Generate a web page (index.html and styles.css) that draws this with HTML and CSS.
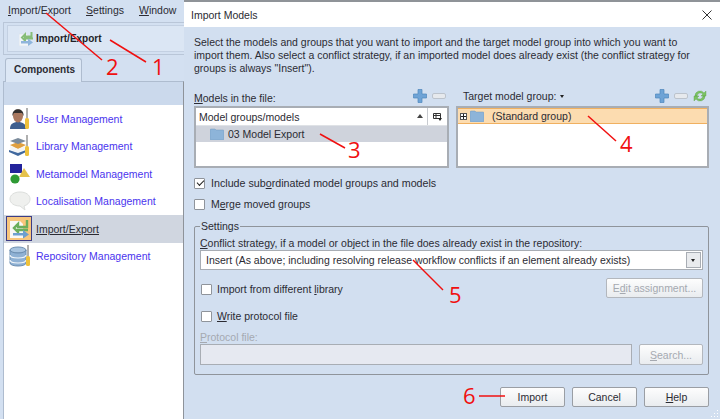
FILE: index.html
```html
<!DOCTYPE html>
<html lang="en">
  <head>
    <meta charset="UTF-8" />
    <title>Import Models</title>
    <link rel="stylesheet" href="styles.css">
  </head>
  <body>
    <div class="app">
      <div class="sidebar">
        <div class="menubar">
          <span><u>I</u>mport/Export</span>
          <span><u>S</u>ettings</span>
          <span><u>W</u>indow</span>
        </div>
        <div class="toolbar">
          <div class="tool-button">
            <svg class="tool-icon" viewBox="0 0 14 15" width="14" height="15">
              <path d="M0 3h8l2 2v10H0z" fill="#f1f5f9" stroke="#d5dde6" stroke-width=".5"/>
              <path d="M12.500 1v4.500H6V3.500L3 6.500l3 3v-2h8" fill="none" stroke="#86bd78" stroke-width="2"/>
              <path d="M2 10h7V7.500l5 4-5 3.500v-2.500H2z" fill="#8fb5dc"/>
            </svg>
            <b>Import/Export</b>
          </div>
        </div>
        <div class="tabs">
          <div class="tab">Components</div>
        </div>
        <div class="panel">
          <div class="panel-band"></div>
          <ul class="nav">
            <li>
              <svg viewBox="0 0 22 22" width="22" height="22">
                <path d="M1 21c0-5 3-7 8-7s8 2 8 7z" fill="#3f5f8f"/>
                <ellipse cx="9" cy="8" rx="5" ry="6.500" fill="#a9785f"/>
                <path d="M3.500 8c-1-9 12-9 11 0l-1.500-3H5z" fill="#33302e"/>
                <rect x="17" y="0" width="2" height="10" fill="#b0b0b0"/>
                <rect x="16" y="10" width="4" height="11" rx="1.500" fill="#eec13c"/>
              </svg>
              <a>User Management</a>
            </li>
            <li>
              <svg viewBox="0 0 22 22" width="22" height="22">
                <path d="M0 14l8-3 9 3-8 4z" fill="#f3f4f5"/>
                <path d="M0 15v2l9 4 8-4v-2l-8 3z" fill="#41699e"/>
                <path d="M1 10l8-3 8 3-8 4z" fill="#e0a040"/>
                <path d="M1 11v2l8 3 8-3v-2l-8 3z" fill="#f6f6f2"/>
                <path d="M1 6l8-3 8 3-8 3z" fill="#7b8b9b"/>
                <rect x="17" y="0" width="2" height="11" fill="#b0b0b0"/>
                <rect x="16" y="11" width="4" height="10" rx="1.500" fill="#eec13c"/>
              </svg>
              <a>Library Management</a>
            </li>
            <li>
              <svg viewBox="0 0 22 22" width="22" height="22">
                <rect x="1" y="1" width="12" height="9" fill="#23239b"/>
                <path d="M15 5l6 9H10z" fill="#e5c24c"/>
                <circle cx="6" cy="16" r="4.600" fill="#2f9a35"/>
              </svg>
              <a>Metamodel Management</a>
            </li>
            <li>
              <svg viewBox="0 0 22 22" width="22" height="22">
                <path d="M11 2c6 0 10 3 10 7s-3 6-6 7l1 4-5-4C5 16 1 13 1 9s4-7 10-7z" fill="#eff0ee" stroke="#dcdedc"/>
              </svg>
              <a>Localisation Management</a>
            </li>
            <li class="active">
              <svg viewBox="0 0 26 25" width="26" height="25">
                <rect x=".5" y=".5" width="25" height="24" fill="#f8c67c" stroke="#3d3d85"/>
                <path d="M4 5h10l3 3v14H4z" fill="#f8f8f6"/>
                <path d="M21 4v7H12V8l-4 4 4 4v-2h10" fill="none" stroke="#6aae5c" stroke-width="2.400"/>
                <path d="M7 17h10v-3l6 4.500-6 4v-3H7z" fill="#6d9fd0"/>
              </svg>
              <a>Import/Export</a>
            </li>
            <li>
              <svg viewBox="0 0 22 22" width="22" height="22">
                <ellipse cx="9" cy="5" rx="8" ry="3" fill="#a8c4e0" stroke="#6d8fb2"/>
                <path d="M1 5v13c0 4 16 4 16 0V5c0 4-16 4-16 0z" fill="#8fb1d4" stroke="#6d8fb2"/>
                <path d="M1 10c0 4 16 4 16 0M1 15c0 4 16 4 16 0" fill="none" stroke="#f1f5f9" stroke-width="1.200"/>
                <rect x="18" y="0" width="2" height="11" fill="#b0b0b0"/>
                <rect x="17" y="11" width="4" height="10" rx="1.500" fill="#eec13c"/>
              </svg>
              <a>Repository Management</a>
            </li>
          </ul>
        </div>
      </div>

      <div class="dialog">
        <div class="titlebar">
          <span>Import Models</span>
          <svg viewBox="0 0 10 10" width="10" height="10"><path d="M.5.5l9 9M9.500.5l-9 9" stroke="#333" fill="none"/></svg>
        </div>
        <div class="dialog-body">
          <p class="intro">Select the models and groups that you want to import and the target model group into which you want to<br>import them. Also select a conflict strategy, if an imported model does already exist (the conflict strategy for<br>groups is always "Insert").</p>

          <div class="lists">
            <div class="list-col">
              <div class="list-head">
                <label><u>M</u>odels in the file:</label>
                <div class="mini-tools">
                  <svg viewBox="0 0 14 14" width="14" height="14"><path d="M5 .5h4v4.500h4.500v4H9v4.500H5V9H.5V5H5z" fill="#6ea3d6" stroke="#4f86bb" stroke-width=".7"/></svg>
                  <svg viewBox="0 0 14 6" width="14" height="6"><rect x=".5" y=".5" width="13" height="5" rx="1.500" fill="#e6e9ed" stroke="#bcc3cc"/></svg>
                </div>
              </div>
              <div class="list-box">
                <div class="col-header">
                  <span>Model groups/models</span>
                  <span class="sort-mark"></span>
                  <span class="col-pick">
                    <svg viewBox="0 0 9 9" width="9" height="9"><path d="M.5 1.500h7v5h-7zM.5 3.500h7M3 1.500v5" fill="none" stroke="#333"/><path d="M5 6h4L7 9z" fill="#222"/></svg>
                  </span>
                </div>
                <div class="model-row">
                  <svg viewBox="0 0 14 12" width="14" height="12"><path d="M0 2q0-1 1-1h4l1 1h7q1 0 1 1v8q0 1-1 1H1q-1 0-1-1z" fill="#8db4d9" stroke="#7199bf" stroke-width=".5"/></svg>
                  <span>03 Model Export</span>
                </div>
              </div>
            </div>
            <div class="list-col target">
              <div class="list-head">
                <label>Target model group: <span class="caret"></span></label>
                <div class="mini-tools">
                  <svg viewBox="0 0 14 14" width="14" height="14"><path d="M5 .5h4v4.500h4.500v4H9v4.500H5V9H.5V5H5z" fill="#6ea3d6" stroke="#4f86bb" stroke-width=".7"/></svg>
                  <svg viewBox="0 0 14 6" width="14" height="6"><rect x=".5" y=".5" width="13" height="5" rx="1.500" fill="#e6e9ed" stroke="#bcc3cc"/></svg>
                  <svg viewBox="0 0 14 14" width="14" height="14"><path d="M2 7a5 5 0 0 1 9-3l2-2v5H8l2-2a3.500 3.500 0 0 0-6 2zM12 7a5 5 0 0 1-9 3l-2 2V7h5l-2 2a3.500 3.500 0 0 0 6-2z" fill="#7cc463" stroke="#5b9e48" stroke-width=".4"/></svg>
                </div>
              </div>
              <div class="list-box">
                <div class="tree-row">
                  <span class="expander"></span>
                  <svg viewBox="0 0 14 12" width="14" height="12"><path d="M0 2q0-1 1-1h4l1 1h7q1 0 1 1v8q0 1-1 1H1q-1 0-1-1z" fill="#8db4d9" stroke="#7199bf" stroke-width=".5"/></svg>
                  <span>(Standard group)</span>
                </div>
              </div>
            </div>
          </div>

          <div class="check-row first"><span class="check checked"></span><span>Include sub<u>o</u>rdinated model groups and models</span></div>
          <div class="check-row second"><span class="check"></span><span>M<u>e</u>rge moved groups</span></div>

          <fieldset class="settings">
            <legend>Settings</legend>
            <div class="conflict-label"><u>C</u>onflict strategy, if a model or object in the file does already exist in the repository:</div>
            <div class="select">
              <span>Insert (As above; including resolving release workflow conflicts if an element already exists)</span>
              <span class="select-btn"></span>
            </div>
            <div class="option-row">
              <div class="check-row"><span class="check"></span><span>Import from different <u>l</u>ibrary</span></div>
              <button class="btn disabled edit-btn">E<u>d</u>it assignment...</button>
            </div>
            <div class="check-row protocol"><span class="check"></span><span><u>W</u>rite protocol file</span></div>
            <div class="protocol-label"><u>P</u>rotocol file:</div>
            <div class="protocol-row">
              <div class="protocol-input"></div>
              <button class="btn disabled search-btn"><u>S</u>earch...</button>
            </div>
          </fieldset>

          <div class="actions">
            <button class="btn">Import</button>
            <button class="btn">Cancel</button>
            <button class="btn"><u>H</u>elp</button>
          </div>

          <svg class="grip" viewBox="0 0 9 9" width="9" height="9">
            <path d="M7 1h1v1H7zM4 4h1v1H4zM7 4h1v1H7zM1 7h1v1H1zM4 7h1v1H4zM7 7h1v1H7z" fill="#fff"/>
          </svg>
        </div>
      </div>
    </div>

    <!-- red callouts drawn on top of the screenshot -->
    <svg class="callouts" viewBox="0 0 720 419" width="720" height="419">
      <g stroke="#f01010" stroke-width="1.500" fill="none">
        <line x1="110" y1="40" x2="146" y2="62"/>
        <line x1="46" y1="13" x2="102" y2="60"/>
        <line x1="320" y1="134" x2="345" y2="148"/>
        <line x1="588" y1="116" x2="616" y2="141"/>
        <line x1="413" y1="260" x2="443" y2="290"/>
        <line x1="479" y1="396" x2="505" y2="396"/>
      </g>
      <g class="callout-num">
        <text x="152" y="75">1</text>
        <text x="106" y="75">2</text>
        <text x="348" y="158">3</text>
        <text x="620" y="152">4</text>
        <text x="449" y="303">5</text>
        <text x="463" y="404">6</text>
      </g>
    </svg>
  </body>
</html>
```

FILE: styles.css
```css
/* General styles */
* {
  box-sizing: border-box;
}

html,
body {
  margin: 0;
  height: 100%;
  overflow: hidden;
}

body {
  font-family: "Liberation Sans", Arial, sans-serif;
  font-size: 10.500px;
  color: #2b2b33;
  position: relative;
}

.app {
  display: flex;
  width: 720px;
  height: 419px;
  background-color: #d2dff0;
}

/* Left side of the main window */
.sidebar {
  width: 184px;
  flex: none;
  display: flex;
  flex-direction: column;
  background-color: #d3e0f1;
}

.menubar {
  height: 20px;
  padding-left: 8px;
  display: flex;
  align-items: center;
  gap: 15px;
}

.toolbar {
  margin: 2px 0 0 3px;
  height: 33px;
  padding: 2px 0 2px 3px;
  border: 1px solid #b9c6d8;
  border-right: none;
}

.tool-button {
  height: 27px;
  padding-left: 11px;
  display: flex;
  align-items: center;
  gap: 3px;
  border: 1px solid #c3d0e2;
  border-right: none;
  background-color: #dbe6f4;
}

.tool-button b {
  font-size: 10px;
  color: #1f1f28;
}

.tabs {
  margin-top: 3px;
  padding-left: 5px;
  height: 23px;
}

.tab {
  width: 77px;
  height: 24px;
  padding: 5px 0 0 8px;
  font-size: 10px;
  font-weight: bold;
  border: 1px solid #aebccf;
  border-bottom: none;
  border-radius: 3px 3px 0 0;
  background-color: #dce7f5;
  position: relative;
  z-index: 1;
}

.panel {
  flex: 1;
  margin-left: 3px;
  display: flex;
  flex-direction: column;
  border-top: 1px solid #aebccf;
  border-left: 1px solid #aebccf;
  border-right: 1px solid #8e939a;
}

.panel-band {
  height: 23px;
  background-color: #cbd9ec;
}

.nav {
  flex: 1;
  list-style: none;
  margin: 0;
  padding: 0;
  background-color: white;
}

.nav li {
  height: 27.500px;
  padding-left: 5px;
  display: flex;
  align-items: center;
  gap: 5px;
  color: #4a34ee;
}

.nav li.active {
  background-color: #d0d6e0;
  color: #2b2b33;
  padding-left: 2px;
  gap: 4px;
}

.nav li.active a {
  text-decoration: underline;
}

/* Dialog */
.dialog {
  flex: 1;
  display: flex;
  flex-direction: column;
  border-top: 2px solid #8f9398;
}

.titlebar {
  height: 25px;
  padding: 0 8px 0 7px;
  background-color: white;
  display: flex;
  align-items: center;
  justify-content: space-between;
}

.dialog-body {
  flex: 1;
  padding: 9px 11px 0 10px;
  position: relative;
}

.intro {
  margin: 0;
  line-height: 13px;
  white-space: nowrap;
}

.lists {
  margin-top: 13px;
  display: flex;
  gap: 7px;
}

.list-col {
  width: 255px;
}

.list-col.target {
  width: 253px;
}

.list-head {
  height: 18px;
  display: flex;
  align-items: flex-start;
  justify-content: space-between;
  padding: 2px 3px 0 0;
}

.list-col:first-child .list-head label {
  padding-top: 2px;
}

.target .list-head {
  padding-left: 7px;
  padding-right: 2px;
}

.caret {
  display: inline-block;
  width: 0;
  height: 0;
  margin: 0 0 2px 1px;
  border: 2px solid transparent;
  border-top: 3px solid #222;
  border-bottom: none;
}

.mini-tools {
  display: flex;
  align-items: center;
  gap: 5px;
  margin-top: -1px;
  height: 14px;
}

.list-box {
  height: 62px;
  background-color: white;
  border: 2px solid #a8adb4;
}

.col-header {
  height: 18px;
  padding-left: 3px;
  display: flex;
  align-items: center;
  justify-content: space-between;
  border-bottom: 1px solid #dfe2e6;
  position: relative;
}

.sort-mark {
  position: absolute;
  right: 24px;
  top: 6px;
  width: 0;
  height: 0;
  border: 3px solid transparent;
  border-top: none;
  border-bottom: 4px solid #444;
}

.col-pick {
  width: 20px;
  height: 100%;
  border-left: 1px solid #c8cbd0;
  display: flex;
  align-items: center;
  justify-content: center;
}

.model-row {
  height: 16px;
  padding-left: 14px;
  display: flex;
  align-items: center;
  gap: 4px;
  background-color: #cfd3dc;
}

.tree-row {
  height: 16px;
  padding-left: 2px;
  display: flex;
  align-items: center;
  gap: 3px;
  background-color: #fcdcb0;
  border-top: 1px solid #f0b060;
  border-bottom: 1px solid #f0b060;
}

.tree-row span:last-child {
  margin-left: 5px;
}

.expander {
  width: 7px;
  height: 7px;
  border: 1px solid #555;
  background: linear-gradient(#222, #222) center / 5px 1px no-repeat,
    linear-gradient(#222, #222) center / 1px 5px no-repeat, white;
}

.check-row {
  display: flex;
  align-items: center;
  gap: 5px;
  height: 14px;
}

.check-row.first {
  margin-top: 8px;
  margin-bottom: 7px;
  gap: 6px;
  font-size: 10.700px;
}

.check-row.second {
  gap: 6px;
}

.check {
  width: 11px;
  height: 11px;
  flex: none;
  background-color: white;
  border: 1px solid #8f949b;
  border-radius: 1px;
  position: relative;
}

.check.checked::after {
  content: "";
  position: absolute;
  left: 1.500px;
  top: 1.500px;
  width: 6px;
  height: 3px;
  border-left: 1.500px solid #222;
  border-bottom: 1.500px solid #222;
  transform: rotate(-45deg);
}

.settings {
  margin: 9px 0 0;
  padding: 5px 5px 0 5px;
  height: 155px;
  min-width: 0;
  border: 1px solid #8f949b;
  border-radius: 2px;
}

.settings legend {
  padding: 0 1px;
  margin-left: 0;
}

.conflict-label {
  height: 11px;
  line-height: 13px;
}

.select {
  margin-top: 2px;
  height: 20px;
  background-color: white;
  border: 1px solid #a8adb4;
  padding-left: 5px;
  display: flex;
  align-items: center;
  justify-content: space-between;
}

.select-btn {
  width: 15px;
  height: 16px;
  margin-right: 1px;
  border: 1px solid #a8adb4;
  background: #e9ebee;
  position: relative;
}

.select-btn::after {
  content: "";
  position: absolute;
  left: 4px;
  top: 6px;
  border: 2px solid transparent;
  border-top: 3px solid #222;
  border-bottom: none;
}

.option-row {
  margin-top: 8px;
  display: flex;
  align-items: center;
  justify-content: space-between;
  height: 20px;
}

.option-row .check-row {
  margin-top: 2px;
  padding-left: 1px;
}

.protocol {
  margin-top: 11px;
  padding-left: 1px;
}

.protocol-label {
  margin-top: 8px;
  height: 13px;
  color: #a5a9b0;
}

.protocol-row {
  margin-top: 0;
  display: flex;
  justify-content: space-between;
}

.protocol-input {
  width: 432px;
  height: 21px;
  background-color: #e6e9f1;
  border: 1px solid #a8adb4;
}

.btn {
  font: inherit;
  color: #2b2b33;
  padding: 0;
  height: 20px;
  width: 65px;
  border: 1px solid #9a9ea4;
  border-radius: 2px;
  background: linear-gradient(#fdfdfd, #e9ecef);
}

.btn.disabled {
  color: #a5a9b0;
  border-color: #b3b7bd;
}

.edit-btn {
  width: 97px;
}

.search-btn {
  width: 64px;
  height: 21px;
}

.actions {
  margin-top: 12px;
  display: flex;
  justify-content: flex-end;
  gap: 7px;
}

.grip {
  position: absolute;
  right: 1px;
  bottom: 1px;
}

/* Callouts */
.callouts {
  position: absolute;
  left: 0;
  top: 0;
}

.callout-num {
  font-family: "Open Sans", sans-serif;
  font-size: 22px;
  fill: #f01010;
}
```
